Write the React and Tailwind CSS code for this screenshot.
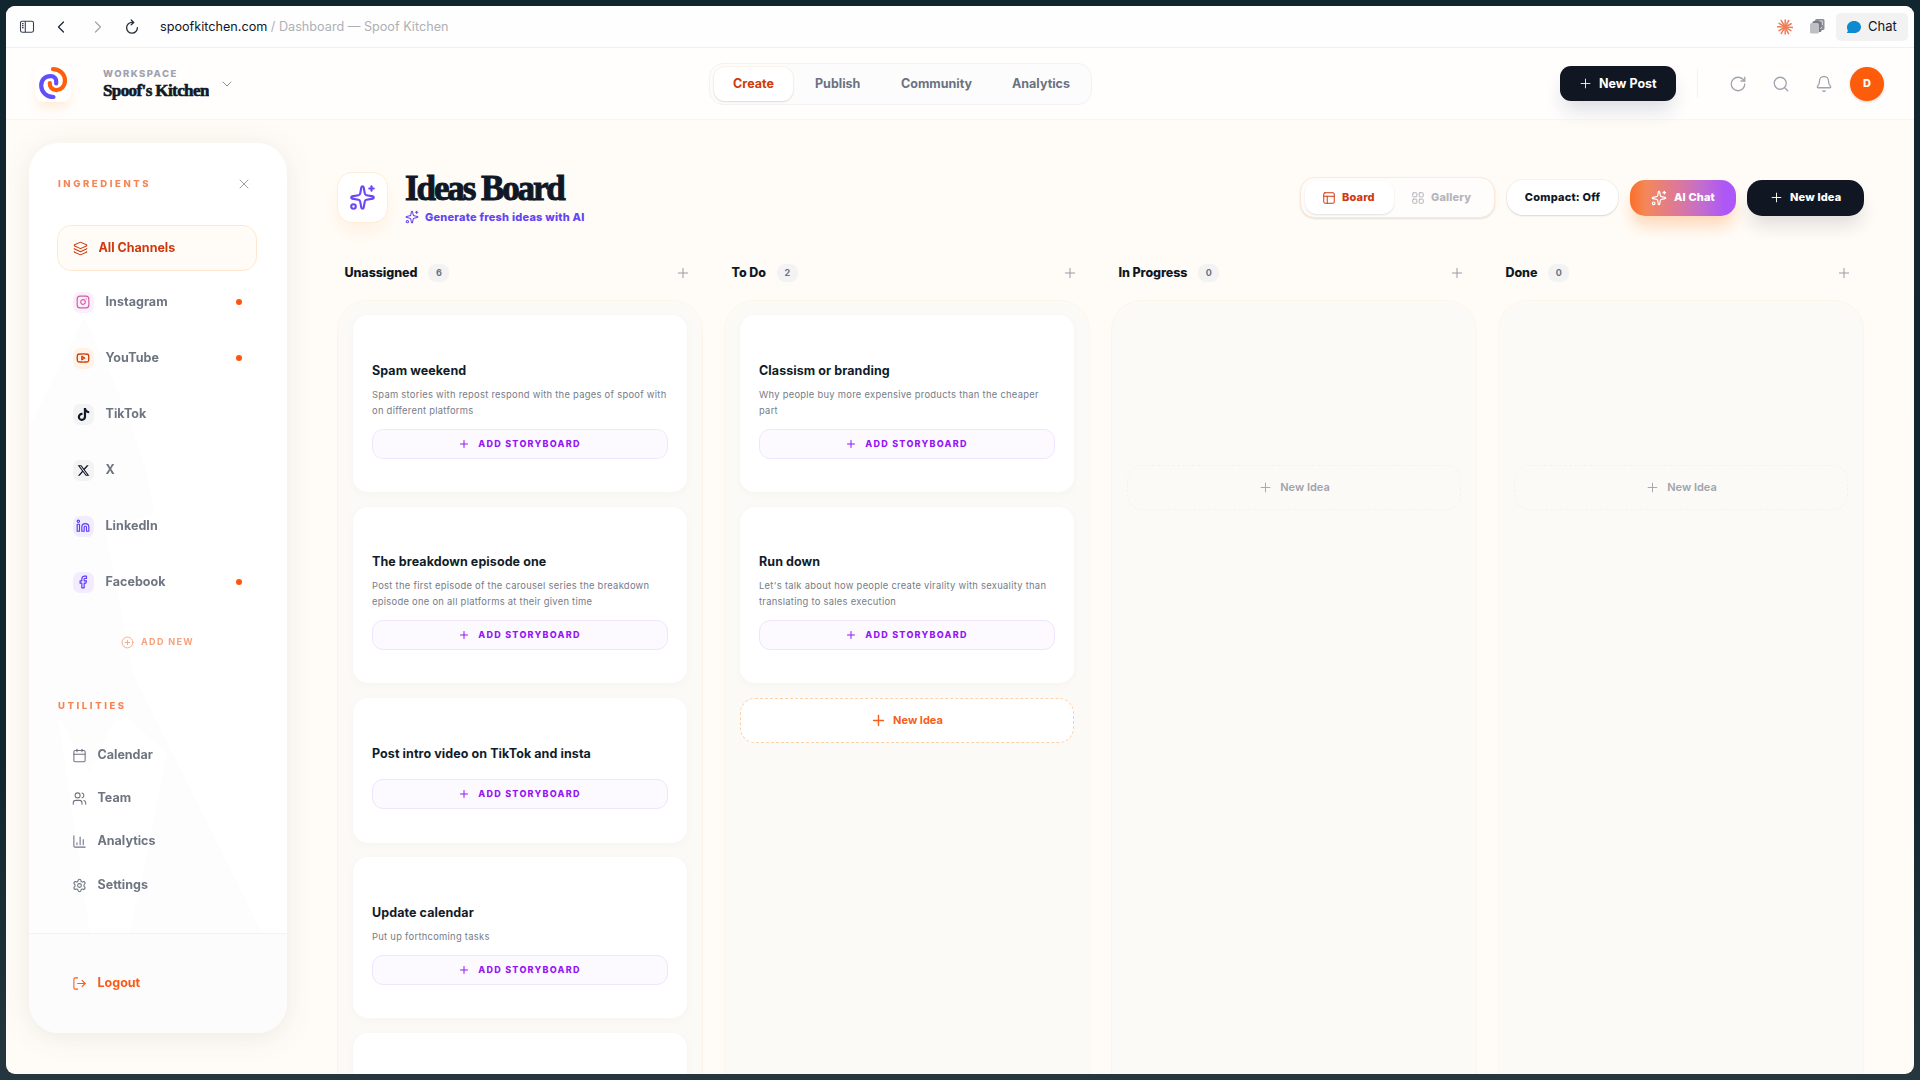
import React from "react";
import {
  ChevronLeft, ChevronRight, ChevronDown, RotateCw, Plus, Search, Bell, X, Layers,
  Instagram, Youtube, Linkedin, Facebook, CirclePlus, Calendar, Users, ChartColumn, Settings,
  LogOut, Sparkles, PanelsTopLeft, LayoutGrid,
} from "lucide-react";
import { FaTiktok, FaXTwitter } from "react-icons/fa6";

const channels = [
  { name: "Instagram", dot: true, tile: "bg-[#f9f0fa] text-[#d65aa8]", icon: <Instagram size={14} strokeWidth={2} /> },
  { name: "YouTube", dot: true, tile: "bg-[#fff3e6] text-[#cf3a10]", icon: <Youtube size={14} strokeWidth={2.3} /> },
  { name: "TikTok", tile: "bg-[#f3f3f4] text-[#111827]", icon: <FaTiktok size={13} /> },
  { name: "X", tile: "bg-[#f3f3f4] text-[#111827]", icon: <FaXTwitter size={13} /> },
  { name: "LinkedIn", tile: "bg-[#f2ecfe] text-[#5b3df5]", icon: <Linkedin size={14} strokeWidth={2} /> },
  { name: "Facebook", dot: true, tile: "bg-[#f2ecfe] text-[#5b3df5]", icon: <Facebook size={14} strokeWidth={2} /> },
];

const utilities = [
  { name: "Calendar", Icon: Calendar },
  { name: "Team", Icon: Users },
  { name: "Analytics", Icon: ChartColumn },
  { name: "Settings", Icon: Settings },
];

const columns = [
  {
    name: "Unassigned", count: 6,
    cards: [
      { title: "Spam weekend", text: ["Spam stories with repost respond with the pages of spoof with", "on different platforms"], size: "h-[177px] mb-[15px]" },
      { title: "The breakdown episode one", text: ["Post the first episode of the carousel series the breakdown", "episode one on all platforms at their given time"], size: "h-[176px] mb-[15px]", shift: "-mt-px" },
      { title: "Post intro video on TikTok and insta", text: [], size: "h-[145px] mb-[14px]" },
      { title: "Update calendar", text: ["Put up forthcoming tasks"], size: "h-[161px] mb-[15px]" },
      { size: "h-[177px]" },
    ],
  },
  {
    name: "To Do", count: 2, add: true,
    cards: [
      { title: "Classism or branding", text: ["Why people buy more expensive products than the cheaper", "part"], size: "h-[177px] mb-[15px]" },
      { title: "Run down", text: ["Let's talk about how people create virality with sexuality than", "translating to sales execution"], size: "h-[176px] mb-[15px]", shift: "-mt-px" },
    ],
  },
  { name: "In Progress", count: 0, cards: [] },
  { name: "Done", count: 0, cards: [] },
];

function Burst() {
  return (
    <svg width="16" height="16" viewBox="-8 -8 16 16" stroke="#ee7d57" strokeWidth="1.5" strokeLinecap="round">
      {[4, 32, 62, 88, 120, 148, 182, 212, 240, 272, 300, 332].map((a, i) => (
        <line key={a} x1="1" y1="0" x2={i % 2 ? 7 : 7.6} y2="0" transform={`rotate(${a})`} />
      ))}
    </svg>
  );
}

function BrowserBar() {
  return (
    <div className="flex h-[42px] shrink-0 items-center border-b border-[#f1f0f1] bg-[#fffefe] pl-[13px] pr-[6px]">
      <svg width="16" height="14" viewBox="0 0 16 14" fill="none" stroke="#374151" strokeWidth="1.1">
        <rect x="1.5" y="1.2" width="13" height="11" rx="1.6" />
        <path d="M6.3 1.2v11M3 3.6h1.6M3 5.6h1.6M3 7.6h1.6" />
      </svg>
      <ChevronLeft size={20} strokeWidth={1.5} className="ml-[16px] text-[#1f2937]" />
      <ChevronRight size={20} strokeWidth={1.5} className="ml-[17px] text-[#a3a5aa]" />
      <svg className="ml-[17px]" width="14" height="16" viewBox="0 0 14 16" fill="none" stroke="#26303a" strokeWidth="1.3" strokeLinecap="round" strokeLinejoin="round">
        <path d="M12.4 8.6A5.4 5.4 0 1 1 7 3.4h1.6M6.2 1l2.6 2.4L6.2 5.8" />
      </svg>
      <p className="ml-[21px] whitespace-nowrap pt-[2px] text-[12.65px] text-[#aeb0b6]">
        <span className="text-[#111827]">spoofkitchen.com</span> / Dashboard — Spoof Kitchen
      </p>
      <div className="ml-auto flex items-center">
        <Burst />
        <svg className="ml-[17px]" width="15" height="15" viewBox="0 0 15 15">
          <rect x="5" y="0" width="9.5" height="11" rx="1.5" fill="#8d9098" />
          <rect x="2.5" y="2" width="9" height="11" rx="1.5" fill="#777a84" />
          <rect x="0" y="4" width="9" height="10.5" rx="1.5" fill="#bfc0c5" />
          <path d="M9.5 2h2.8v4M10 9.5l2-1" stroke="#e4e5e8" strokeWidth=".9" fill="none" />
        </svg>
        <div className="ml-[11px] flex h-[28px] w-[72px] items-center rounded-[5px] bg-[#f3f2f2] pl-[10px]">
          <svg width="16" height="14" viewBox="0 0 16 14" fill="#0c8bd0">
            <path d="M8.2 1C12 1 15 3.6 15 7s-2.8 6-6.6 6H1.2c-.4 0-.5-.4-.2-.6.8-.7.9-1.3.7-2C1.2 9.4 1 8.2 1 7.2 1 3.7 4.2 1 8.2 1z" />
          </svg>
          <span className="ml-[6px] pt-px text-[13px] text-[#111827]">Chat</span>
        </div>
      </div>
    </div>
  );
}

function Logo() {
  return (
    <div className="mt-px flex h-[36px] w-[36px] items-center justify-center rounded-[9px] bg-white shadow-[0_8px_12px_-2px_rgba(255,190,130,0.28)]">
      <svg className="-mt-[3px] shrink-0" width="30" height="34" viewBox="0 0 30 34" fill="none" strokeWidth="4.2" strokeLinecap="round">
        <path d="M18.2 17.5V15.5A5 5 0 0 0 13.5 10.2C7 9.6 3.2 14 3.2 19.5C3.2 26 8.5 31 15.5 31" stroke="#6050f8" />
        <path d="M15 3.2C22 3.2 27 8.5 27 14.5C27 20.5 22.5 24.5 17.5 24C13.5 23.5 11.6 20.5 11.8 17" stroke="#fd5f0a" />
      </svg>
    </div>
  );
}

function Header() {
  return (
    <header className="flex h-[72px] shrink-0 items-center border-b border-[#faf5ee] bg-[#fffefd]">
      <div className="flex w-[703px] items-center pl-[29px]">
        <Logo />
        <div className="ml-[32px]">
          <div className="text-[9.5px] font-extrabold leading-[12px] tracking-[1.45px] text-[#9da2ae]">WORKSPACE</div>
          <div className="h-[20px] overflow-hidden whitespace-nowrap font-['Liberation_Serif',serif] text-[17px] font-bold leading-[22px] tracking-[-0.6px] text-[#101826] [-webkit-text-stroke:0.6px_#101826]">Spoof's Kitchen</div>
        </div>
        <ChevronDown size={16} strokeWidth={1.5} className="ml-[10px] text-[#8d929c]" />
      </div>
      <nav className="flex h-[42px] w-[383px] items-center rounded-[14px] border border-[#f2f2f4] bg-[#fcfcfd] pl-[4px] text-[12.5px] font-bold text-[#6b7280]">
        <span className="flex h-[34px] w-[79px] items-center justify-center rounded-[11px] bg-white pt-px text-[#d03a0c] shadow-[0_1px_2px_rgba(0,0,0,0.1),0_0_0_1px_#fdf3e6]">Create</span>
        <span className="ml-[22px] w-[86px] pt-px">Publish</span>
        <span className="w-[111px] pt-px">Community</span>
        <span className="pt-px">Analytics</span>
      </nav>
      <div className="ml-auto mr-[30px] flex items-center">
        <button className="flex h-[35px] w-[116px] items-center rounded-[11px] bg-[#101722] pl-[18px] text-[12.5px] font-bold text-white shadow-[0_12px_20px_-4px_rgba(30,27,75,0.16)]">
          <Plus size={15} strokeWidth={1.4} className="mr-[6px]" />
          <span className="pt-px">New Post</span>
        </button>
        <div className="ml-[21px] h-[29px] w-px bg-[#f3f2f3]" />
        <div className="ml-[31px] flex items-center gap-[25px] text-[#9ea3ae]">
          <RotateCw size={18} strokeWidth={1.7} />
          <Search size={18} strokeWidth={1.7} />
          <Bell size={18} strokeWidth={1.7} />
        </div>
        <div className="ml-[17px] flex h-[34px] w-[34px] items-center justify-center rounded-full bg-[#fd5c0a] text-[11px] font-extrabold text-white shadow-[0_1px_3px_rgba(0,0,0,0.18)]">D</div>
      </div>
    </header>
  );
}

function SectionLabel({ children }) {
  return <span className="pt-px text-[9.5px] font-extrabold tracking-[2.6px] text-[#f68555]">{children}</span>;
}

function Sidebar() {
  return (
    <aside className="relative mt-[23px] ml-[22.5px] flex h-[890px] w-[258px] shrink-0 flex-col overflow-hidden rounded-[30px] bg-white">
      <svg className="absolute inset-0" width="258" height="790" fill="#fdfdfe">
        <path d="M55 174L0 284V790H61L29 572L60 630L88 572H96L126 600L138 610L101 790H233L104 530L76 387L126 370Q118 320 90 250Z" />
      </svg>
      <div className="relative flex h-[82px] shrink-0 items-center justify-between pr-[35px] pl-[29.5px]">
        <SectionLabel>INGREDIENTS</SectionLabel>
        <X size={16} strokeWidth={1.5} className="text-[#9b9fa8]" />
      </div>
      <div className="relative mr-[30px] ml-[28px] flex h-[46px] shrink-0 items-center rounded-[14px] border border-[#ffe8d2] bg-[#fffcf7] pl-[15px] text-[12.5px] font-bold text-[#cf390f]">
        <Layers size={15} strokeWidth={1.7} className="mr-[11px]" />
        All Channels
      </div>
      <div className="relative mt-[3px] flex flex-col">
        {channels.map((c) => (
          <div key={c.name} className="flex h-[56px] items-center pr-[44.5px] pl-[44px] text-[12.5px] font-bold text-[#6e7581]">
            <span className={`mr-[12px] flex h-[21px] w-[21px] items-center justify-center rounded-[7px] ${c.tile}`}>{c.icon}</span>
            <span className="tracking-[0.05px]">{c.name}</span>
            {c.dot && <span className="ml-auto h-[6px] w-[6px] rounded-full bg-[#fd560a]" />}
          </div>
        ))}
      </div>
      <div className="relative mt-[25px] flex h-[14px] items-center pl-[92px] text-[9px] font-bold tracking-[1.35px] text-[#f7a27d]">
        <CirclePlus size={13} strokeWidth={1.6} className="mr-[7.5px]" />
        ADD NEW
      </div>
      <div className="relative mt-[50px] flex h-[14px] items-center pl-[29.5px]">
        <SectionLabel>UTILITIES</SectionLabel>
      </div>
      <div className="relative mt-[20.5px]">
        {utilities.map(({ name, Icon }) => (
          <div key={name} className="flex h-[43.3px] items-center pl-[43px] text-[12.5px] font-bold text-[#6e7581]">
            <Icon size={15} strokeWidth={1.7} className="mr-[11px]" />
            {name}
          </div>
        ))}
      </div>
      <div className="relative mt-auto flex h-[100px] shrink-0 items-center border-t border-[#f3f3f5] bg-[#fcfcfd] pl-[43px] text-[12.5px] font-bold text-[#f95a16]">
        <LogOut size={15} strokeWidth={1.7} className="mr-[11px]" />
        Logout
      </div>
    </aside>
  );
}

function Title() {
  return (
    <div className="flex h-[51px] items-center">
      <div className="flex h-[51px] w-[51px] shrink-0 items-center justify-center rounded-[15px] border border-[#ffecd9] bg-white text-[#6a46f6] shadow-[0_10px_18px_-2px_rgba(255,200,150,0.22)]">
        <Sparkles size={27} strokeWidth={1.9} />
      </div>
      <div className="ml-[17px] h-[53px]">
        <h1 className="whitespace-nowrap pt-px font-['Liberation_Serif',serif] text-[35px] font-bold leading-[33px] tracking-[-2.1px] text-[#101826] [-webkit-text-stroke:1px_#101826]">Ideas Board</h1>
        <div className="mt-[5px] flex items-center text-[11px] font-extrabold leading-[14px] tracking-[0.22px] text-[#6246f2]">
          <Sparkles size={14} strokeWidth={1.8} className="mr-[6px]" />
          Generate fresh ideas with AI
        </div>
      </div>
      <div className="ml-auto flex items-center text-[11px] font-extrabold tracking-[0.15px]">
        <div className="flex h-[41px] w-[195px] items-center rounded-[15px] border border-[#ffe9d5] bg-[#fffdfb] pl-[4px] shadow-[0_1px_2px_rgba(0,0,0,0.12)]">
          <div className="flex h-[33px] w-[89px] items-center rounded-[12px] bg-white pl-[17px] text-[#cf390f] shadow-[0_1px_2px_rgba(0,0,0,0.12)]">
            <PanelsTopLeft size={14} strokeWidth={1.7} className="mr-[6px]" />
            Board
          </div>
          <div className="flex items-center pl-[17px] text-[#b4b6bc]">
            <LayoutGrid size={14} strokeWidth={1.7} className="mr-[6px]" />
            Gallery
          </div>
        </div>
        <div className="ml-[12px] flex h-[35px] w-[111px] items-center justify-center rounded-[16px] bg-white tracking-[0.2px] text-[#101826] shadow-[0_1px_2px_rgba(0,0,0,0.12),0_0_0_1px_rgba(0,0,0,0.03)]">Compact: Off</div>
        <div className="ml-[12px] flex h-[36px] w-[106px] items-center rounded-[15px] bg-[linear-gradient(90deg,#fb6f28_0%,#f4875a_15%,#d977a0_48%,#c56fc8_65%,#ad57f8_90%)] pl-[21px] text-white shadow-[0_12px_16px_-2px_rgba(255,150,70,0.35)]">
          <Sparkles size={16} strokeWidth={1.8} className="mr-[7px]" />
          AI Chat
        </div>
        <div className="ml-[11px] flex h-[36px] w-[117px] items-center rounded-[15px] bg-[#101722] pl-[22px] text-white shadow-[0_12px_18px_-3px_rgba(30,27,60,0.14)]">
          <Plus size={15} strokeWidth={1.5} className="mr-[6px]" />
          New Idea
        </div>
      </div>
    </div>
  );
}

function Card({ title, text, size, shift = "" }) {
  return (
    <div className={`shrink-0 rounded-[15px] bg-white px-[19px] pt-[47px] shadow-[0_2px_8px_rgba(60,60,40,0.03)] ${size}`}>
      {title && (
        <div className={shift}>
          <div className="whitespace-nowrap text-[12.5px] font-bold leading-[17px] tracking-[0.08px] text-[#111c29]">{title}</div>
          <div className={text.length ? "mt-[8px] mb-[10px]" : "h-[17px]"}>
            {text.map((line) => (
              <p key={line} className="whitespace-nowrap text-[9.4px] leading-[16px] tracking-[0.275px] text-[#767c89]">{line}</p>
            ))}
          </div>
          <div className="flex h-[30px] items-center justify-center rounded-[11px] border border-[#efe6fd] bg-[#fcfaff] pr-px text-[9px] font-extrabold tracking-[1.25px] text-[#9517f5]">
            <Plus size={12} strokeWidth={2} className="mr-[8px]" />
            ADD STORYBOARD
          </div>
        </div>
      )}
    </div>
  );
}

function Column({ column }) {
  return (
    <section className="flex w-[366px] shrink-0 flex-col">
      <div className="flex h-[18px] shrink-0 items-center pr-[12px] pl-[7.5px]">
        <h2 className="text-[12.5px] font-extrabold tracking-[-0.08px] text-[#101826]">{column.name}</h2>
        <span className="ml-[11px] flex h-[18px] w-[21px] items-center justify-center rounded-[8px] bg-[#f3f3f3] text-[9px] font-bold text-[#6b7280]">{column.count}</span>
        <Plus size={16} strokeWidth={1.5} className="ml-auto text-[#989ca5]" />
      </div>
      <div className="mt-[17.5px] flex flex-1 flex-col overflow-hidden rounded-t-[30px] border border-b-0 border-[#fef5ea] bg-[#fbfaf6] px-[15px] pt-[14px]">
        {column.cards.map((c, i) => <Card key={i} {...c} />)}
        {column.add && (
          <div className="flex h-[45px] shrink-0 items-center justify-center rounded-[15px] border border-dashed border-[#ffcfa5] bg-white pr-px text-[11px] font-bold text-[#f5611c]">
            <Plus size={17} strokeWidth={2} className="mr-[6px]" />
            New Idea
          </div>
        )}
        {column.cards.length === 0 && (
          <div className="mt-[150px] flex h-[45px] shrink-0 items-center justify-center rounded-[15px] border border-dashed border-[#f3f3f1] text-[11px] font-semibold text-[#a0a4ad]">
            <Plus size={15} strokeWidth={1.5} className="mr-[7px]" />
            New Idea
          </div>
        )}
      </div>
    </section>
  );
}

export default function App() {
  return (
    <div className="h-[1080px] w-[1920px] overflow-hidden bg-[linear-gradient(180deg,#12262f_0%,#10272f_70%,#25363e_100%)] p-[6px] font-['Inter',sans-serif]">
      <div className="flex h-[1068px] w-[1908px] flex-col overflow-hidden rounded-[9px] bg-[#fffcf7]">
        <BrowserBar />
        <Header />
        <div className="flex min-h-0 flex-1">
          <div className="w-[331px] shrink-0">
            <div className="w-[281px] [filter:drop-shadow(0_4px_14px_rgba(60,50,40,0.09))]">
              <Sidebar />
            </div>
          </div>
          <main className="flex w-[1527px] shrink-0 flex-col pt-[52px]">
            <Title />
            <div className="mt-[41px] flex min-h-0 flex-1 justify-between">
              {columns.map((c) => <Column key={c.name} column={c} />)}
            </div>
          </main>
        </div>
      </div>
    </div>
  );
}
